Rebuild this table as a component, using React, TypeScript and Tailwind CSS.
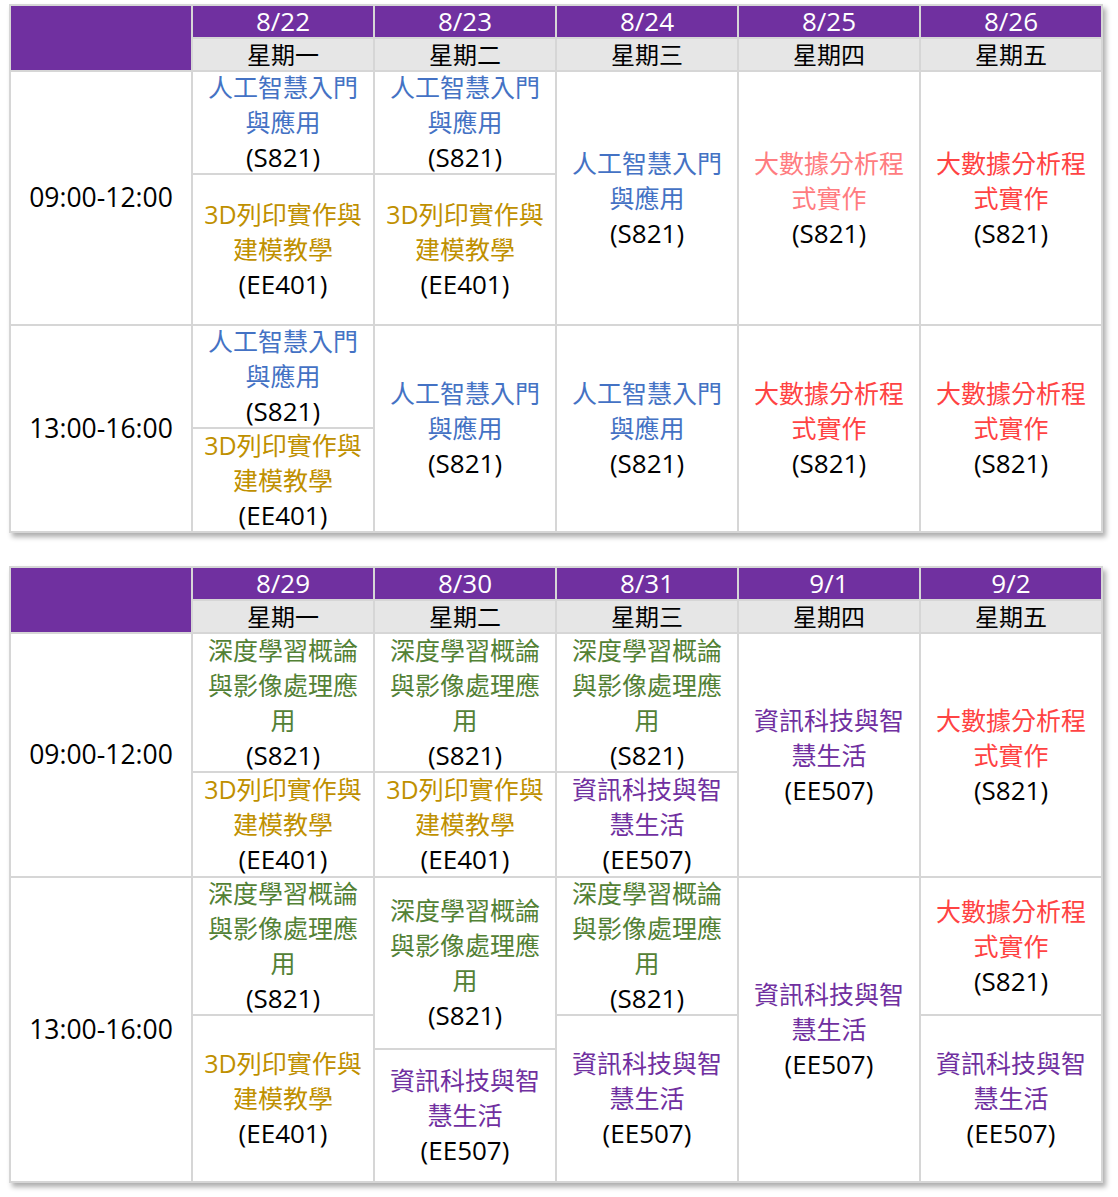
import React from 'react';

type Course = {
  title: string;
  room: string;
  color: string;
  place: string;
};

const BLUE = 'text-[#4472c4]';
const GOLD = 'text-[#bf9000]';
const PINK = 'text-[#ff7c80]';
const RED = 'text-[#ff4343]';
const GREEN = 'text-[#538135]';
const PURPLE = 'text-[#7030a0]';

const AI = '人工智慧入門與應用';
const PRINT = '3D列印實作與建模教學';
const DATA = '大數據分析程式實作';
const DEEP = '深度學習概論與影像處理應用';
const LIFE = '資訊科技與智慧生活';

const week1 = {
  dates: ['8/22', '8/23', '8/24', '8/25', '8/26'],
  rows: 'grid-rows-[31px_31px_101px_149px_101px_102px]',
  times: [
    { label: '09:00-12:00', place: 'col-start-1 row-start-3 row-span-2' },
    { label: '13:00-16:00', place: 'col-start-1 row-start-5 row-span-2' },
  ],
  courses: [
    { title: AI, room: '(S821)', color: BLUE, place: 'col-start-2 row-start-3' },
    { title: PRINT, room: '(EE401)', color: GOLD, place: 'col-start-2 row-start-4' },
    { title: AI, room: '(S821)', color: BLUE, place: 'col-start-3 row-start-3' },
    { title: PRINT, room: '(EE401)', color: GOLD, place: 'col-start-3 row-start-4' },
    { title: AI, room: '(S821)', color: BLUE, place: 'col-start-4 row-start-3 row-span-2' },
    { title: DATA, room: '(S821)', color: PINK, place: 'col-start-5 row-start-3 row-span-2' },
    { title: DATA, room: '(S821)', color: RED, place: 'col-start-6 row-start-3 row-span-2' },
    { title: AI, room: '(S821)', color: BLUE, place: 'col-start-2 row-start-5' },
    { title: PRINT, room: '(EE401)', color: GOLD, place: 'col-start-2 row-start-6' },
    { title: AI, room: '(S821)', color: BLUE, place: 'col-start-3 row-start-5 row-span-2' },
    { title: AI, room: '(S821)', color: BLUE, place: 'col-start-4 row-start-5 row-span-2' },
    { title: DATA, room: '(S821)', color: RED, place: 'col-start-5 row-start-5 row-span-2' },
    { title: DATA, room: '(S821)', color: RED, place: 'col-start-6 row-start-5 row-span-2' },
  ] as Course[],
};

const week2 = {
  dates: ['8/29', '8/30', '8/31', '9/1', '9/2'],
  rows: 'grid-rows-[31px_31px_137px_103px_136px_32px_131px]',
  times: [
    { label: '09:00-12:00', place: 'col-start-1 row-start-3 row-span-2' },
    { label: '13:00-16:00', place: 'col-start-1 row-start-5 row-span-3' },
  ],
  courses: [
    // morning
    { title: DEEP, room: '(S821)', color: GREEN, place: 'col-start-2 row-start-3' },
    { title: PRINT, room: '(EE401)', color: GOLD, place: 'col-start-2 row-start-4' },
    { title: DEEP, room: '(S821)', color: GREEN, place: 'col-start-3 row-start-3' },
    { title: PRINT, room: '(EE401)', color: GOLD, place: 'col-start-3 row-start-4' },
    { title: DEEP, room: '(S821)', color: GREEN, place: 'col-start-4 row-start-3' },
    { title: LIFE, room: '(EE507)', color: PURPLE, place: 'col-start-4 row-start-4' },
    { title: LIFE, room: '(EE507)', color: PURPLE, place: 'col-start-5 row-start-3 row-span-2' },
    { title: DATA, room: '(S821)', color: RED, place: 'col-start-6 row-start-3 row-span-2' },
    // afternoon
    { title: DEEP, room: '(S821)', color: GREEN, place: 'col-start-2 row-start-5' },
    { title: PRINT, room: '(EE401)', color: GOLD, place: 'col-start-2 row-start-6 row-span-2' },
    { title: DEEP, room: '(S821)', color: GREEN, place: 'col-start-3 row-start-5 row-span-2' },
    { title: LIFE, room: '(EE507)', color: PURPLE, place: 'col-start-3 row-start-7' },
    { title: DEEP, room: '(S821)', color: GREEN, place: 'col-start-4 row-start-5' },
    { title: LIFE, room: '(EE507)', color: PURPLE, place: 'col-start-4 row-start-6 row-span-2' },
    { title: LIFE, room: '(EE507)', color: PURPLE, place: 'col-start-5 row-start-5 row-span-3' },
    { title: DATA, room: '(S821)', color: RED, place: 'col-start-6 row-start-5' },
    { title: LIFE, room: '(EE507)', color: PURPLE, place: 'col-start-6 row-start-6 row-span-2' },
  ] as Course[],
};

const weekdays = ['星期一', '星期二', '星期三', '星期四', '星期五'];
const dateCols = ['col-start-2', 'col-start-3', 'col-start-4', 'col-start-5', 'col-start-6'];

const WeekTable: React.FC<{ week: typeof week1 }> = ({ week }) => (
  <div
    className={`grid w-fit grid-cols-[repeat(6,180px)] ${week.rows} gap-[2px] p-[2px] bg-[#d6d6d6] shadow-[3px_4px_5px_rgba(0,0,0,0.32)]`}
  >
    {/* Header */}
    <div className="col-start-1 row-start-1 row-span-2 bg-[#7030a0]" />
    {week.dates.map((d, i) => (
      <div
        key={d}
        className={`${dateCols[i]} row-start-1 bg-[#7030a0] flex items-center justify-center text-white text-[26px] leading-[31px]`}
      >
        {d}
      </div>
    ))}
    {weekdays.map((w, i) => (
      <div
        key={w}
        className={`${dateCols[i]} row-start-2 bg-[#e6e6e6] flex items-center justify-center text-black text-[24px] leading-[31px]`}
      >
        {w}
      </div>
    ))}

    {/* Time slots */}
    {week.times.map((t) => (
      <div key={t.label} className={`${t.place} bg-white flex items-center justify-center text-black text-[26.5px]`}>
        {t.label}
      </div>
    ))}

    {/* Courses */}
    {week.courses.map((c, i) => (
      <div
        key={i}
        className={`${c.place} bg-white flex flex-col items-center justify-center px-[6px] text-center text-[25px] leading-[35px]`}
      >
        <div className={c.color}>{c.title}</div>
        <div className="text-black text-[26px]">{c.room}</div>
      </div>
    ))}
  </div>
);

export default function App() {
  return (
    <div className="min-h-screen bg-white pl-[9px] pt-[4px] pb-[14px] font-['Open_Sans','Noto_Sans_CJK_TC',sans-serif]">
      <div className="flex flex-col gap-[33px]">
        <WeekTable week={week1} />
        <WeekTable week={week2} />
      </div>
    </div>
  );
}
